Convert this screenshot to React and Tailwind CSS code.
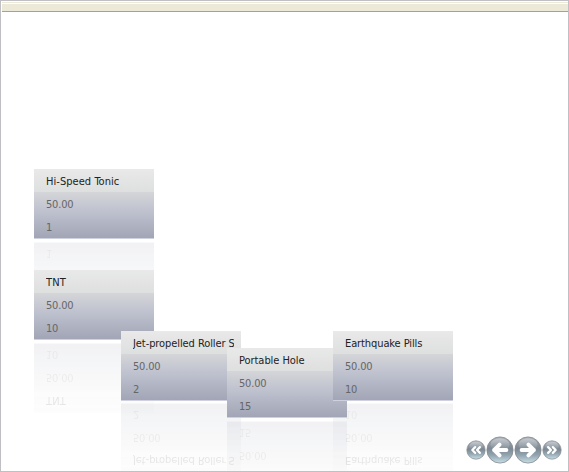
const items = [
  { name: "Hi-Speed Tonic", price: "50.00", qty: "1", pos: "left-[33px] top-[168px]", refl: "left-[33px] top-[241px]", track: "tracking-[0.05px]" },
  { name: "TNT", price: "50.00", qty: "10", pos: "left-[33px] top-[269px]", refl: "left-[33px] top-[342px]", track: "tracking-[0.1px]" },
  { name: "Jet-propelled Roller Skates", price: "50.00", qty: "2", pos: "left-[120px] top-[330px]", refl: "left-[120px] top-[402px]", track: "tracking-[-0.08px]" },
  { name: "Portable Hole", price: "50.00", qty: "15", pos: "left-[226px] top-[347px]", refl: "left-[226px] top-[420px]", track: "tracking-[-0.05px]" },
  { name: "Earthquake Pills", price: "50.00", qty: "10", pos: "left-[332px] top-[330px]", refl: "left-[332px] top-[402px]", track: "tracking-[-0.1px]" },
];

function Card({ item }) {
  return (
    <div className="flex h-[70px] w-[120px] flex-col border-b border-[#d0d1df] bg-linear-to-b from-[#d5d6d9] from-33% via-[#bec1ce] via-62% to-[#a1a5b5] text-[11px] text-[#666]">
      <div className="h-[23px] shrink-0 bg-linear-to-b from-[#e9e9e9] to-[#dedfdf] pr-[7px] pl-3 text-[#222]">
        <div className={`h-[23px] overflow-hidden leading-[26px] whitespace-nowrap ${item.track}`}>{item.name}</div>
      </div>
      <div className="h-[23px] shrink-0 pl-3 leading-[26px] tracking-[-0.2px]">{item.price}</div>
      <div className="h-[23px] shrink-0 pl-3 leading-[26px] tracking-[-0.2px]">{item.qty}</div>
    </div>
  );
}

function BigArrow({ flip }) {
  return (
    <svg viewBox="0 0 28 28" className={`size-7 ${flip ? "-scale-x-100" : ""}`}>
      <circle cx="14" cy="14" r="13.1" fill="url(#orb)" stroke="#84898f" strokeWidth=".8" />
      <ellipse cx="14" cy="8.5" rx="9.5" ry="6.2" fill="url(#shine)" />
      <path d="M7.6 14H20M14.4 8.6L19.8 14L14.4 19.4" fill="none" stroke="#fff" strokeWidth="3.9" strokeLinecap="round" strokeLinejoin="round" />
    </svg>
  );
}

function SmallArrow({ flip }) {
  return (
    <svg viewBox="0 0 20 20" className={`size-5 ${flip ? "-scale-x-100" : ""}`}>
      <circle cx="10" cy="10" r="9.2" fill="url(#orb)" stroke="#84898f" strokeWidth=".7" />
      <ellipse cx="10" cy="6" rx="6.8" ry="4.4" fill="url(#shine)" />
      <path d="M6.1 7.1L9 10L6.1 12.9M10.8 7.1L13.7 10L10.8 12.9" fill="none" stroke="#fff" strokeWidth="2.2" strokeLinecap="round" strokeLinejoin="round" />
    </svg>
  );
}

export default function App() {
  return (
    <div className="relative h-[472px] w-[569px] overflow-hidden border border-[#c0c0c4] bg-white font-['DejaVu_Sans_Condensed','DejaVu_Sans',sans-serif]">
      <svg className="absolute size-0">
        <defs>
          <linearGradient id="orb" x1="0" y1="0" x2="0" y2="1">
            <stop offset="0" stopColor="#a9b0b7" />
            <stop offset=".45" stopColor="#7c8893" />
            <stop offset=".7" stopColor="#93a5b0" />
            <stop offset="1" stopColor="#c8e0e8" />
          </linearGradient>
          <linearGradient id="shine" x1="0" y1="0" x2="0" y2="1">
            <stop offset="0" stopColor="#fff" stopOpacity=".35" />
            <stop offset="1" stopColor="#fff" stopOpacity="0" />
          </linearGradient>
        </defs>
      </svg>
      <div className="ml-px h-[11px] border-t border-b border-t-white border-b-[#a5a294] bg-[#ece9d8] shadow-[inset_0_1px_0_#ece9d8,inset_0_2px_0_#fff]" />
      {items.map((item) => (
        <div key={item.name} className={`absolute ${item.refl} -scale-y-100 opacity-[.145] mask-linear-0 mask-linear-from-[#000] mask-linear-to-[rgb(0_0_0/.7)]`}>
          <Card item={item} />
        </div>
      ))}
      {items.map((item) => (
        <div key={item.name} className={`absolute ${item.pos}`}>
          <Card item={item} />
        </div>
      ))}
      <div className="absolute right-[6px] bottom-[7px] flex items-center">
        <SmallArrow flip />
        <BigArrow flip />
        <BigArrow />
        <SmallArrow />
      </div>
    </div>
  );
}
